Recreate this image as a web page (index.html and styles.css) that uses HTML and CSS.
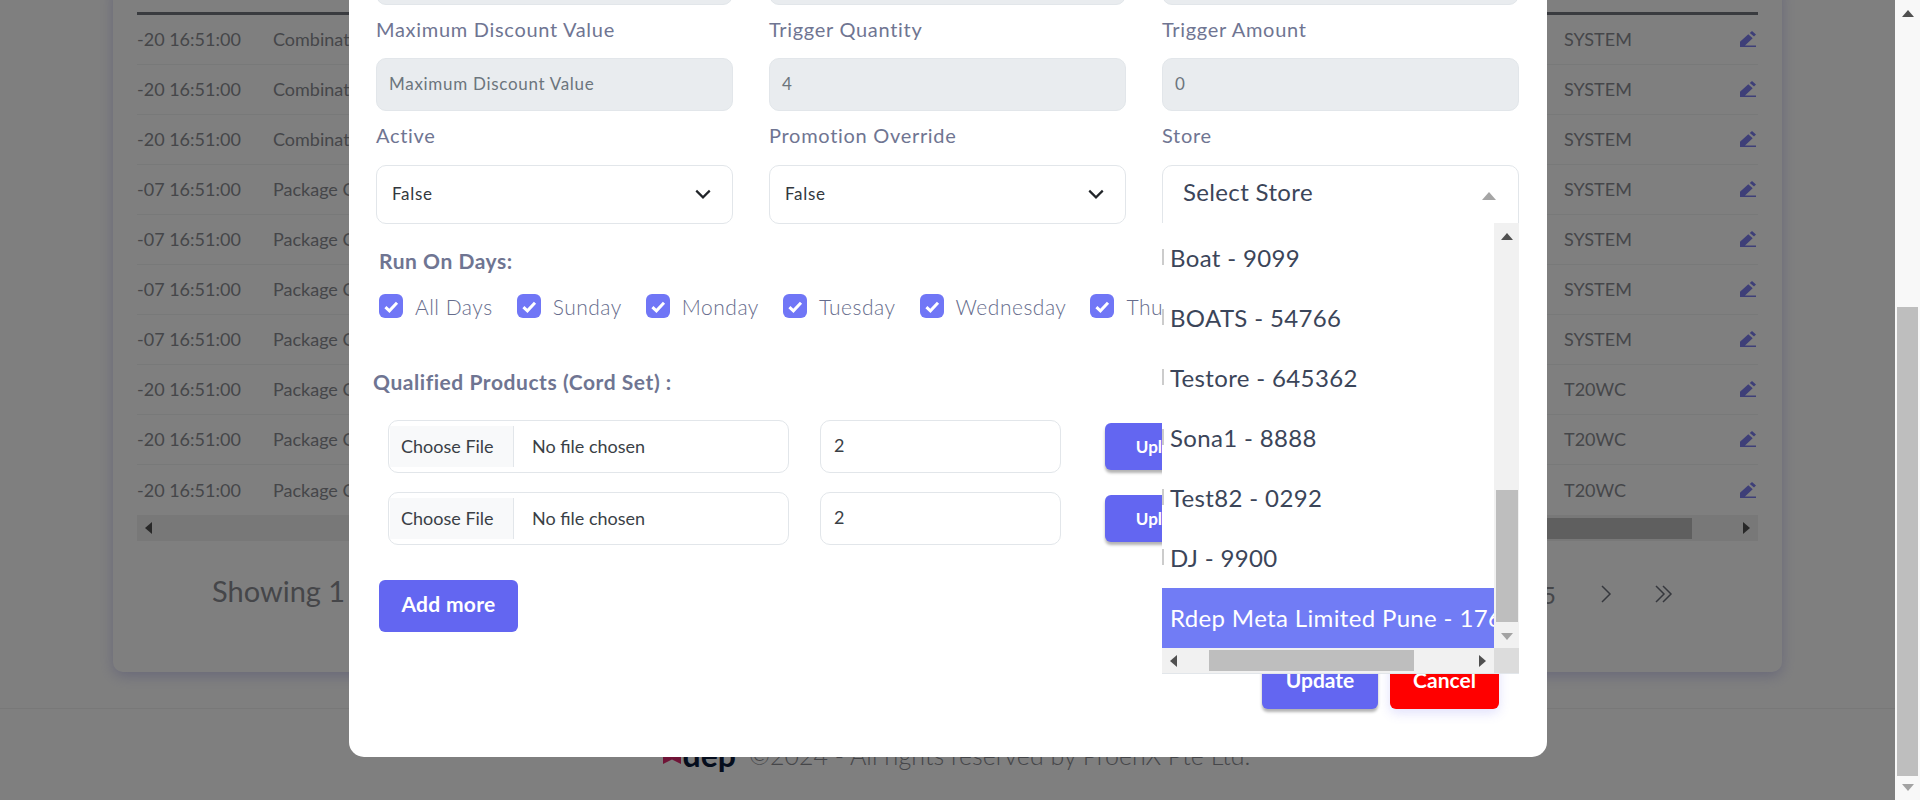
FILE: index.html
```html
<!DOCTYPE html>
<html lang="en">
  <head>
    <meta charset="UTF-8" />
    <meta name="viewport" content="width=device-width, initial-scale=1.0" />
    <title>Edit Promotion</title>
    <link rel="stylesheet" href="styles.css">
  </head>
  <body>
    <svg class="sprites">
      <symbol id="pen" viewBox="0 0 16 16"><path d="M0 10.7 8.3 3.2 12.7 7.3 5 14.5H0ZM9.8 1.9 12 0 16 3.5 14 5.6ZM0 14.5H16V16H0Z"/></symbol>
      <symbol id="tick" viewBox="0 0 12 12"><path d="M3.2 6.6 5.2 8.4 9 4.4"/></symbol>
    </svg>
    <div class="viewport">
      <div class="page">
        <div class="card">
          <div class="table-head"></div>
          <div class="row"><span>-20 16:51:00</span><span>Combination</span><span>SYSTEM</span><svg class="edit"><use href="#pen"/></svg></div>
          <div class="row"><span>-20 16:51:00</span><span>Combination</span><span>SYSTEM</span><svg class="edit"><use href="#pen"/></svg></div>
          <div class="row"><span>-20 16:51:00</span><span>Combination</span><span>SYSTEM</span><svg class="edit"><use href="#pen"/></svg></div>
          <div class="row"><span>-07 16:51:00</span><span>Package Combo</span><span>SYSTEM</span><svg class="edit"><use href="#pen"/></svg></div>
          <div class="row"><span>-07 16:51:00</span><span>Package Combo</span><span>SYSTEM</span><svg class="edit"><use href="#pen"/></svg></div>
          <div class="row"><span>-07 16:51:00</span><span>Package Combo</span><span>SYSTEM</span><svg class="edit"><use href="#pen"/></svg></div>
          <div class="row"><span>-07 16:51:00</span><span>Package Combo</span><span>SYSTEM</span><svg class="edit"><use href="#pen"/></svg></div>
          <div class="row"><span>-20 16:51:00</span><span>Package Combo</span><span>T20WC</span><svg class="edit"><use href="#pen"/></svg></div>
          <div class="row"><span>-20 16:51:00</span><span>Package Combo</span><span>T20WC</span><svg class="edit"><use href="#pen"/></svg></div>
          <div class="row row-last"><span>-20 16:51:00</span><span>Package Combo</span><span>T20WC</span><svg class="edit"><use href="#pen"/></svg></div>
          <div class="table-scroll">
            <span class="arrow arrow-left"></span>
            <span class="table-thumb"></span>
            <span class="arrow arrow-right"></span>
          </div>
          <div class="pager">
            <span class="showing">Showing 1 to 10</span>
            <div class="pages">
              <span class="page-no">5</span>
              <svg class="chev" viewBox="0 0 12 20"><path d="M2 2 10 10 2 18"/></svg>
              <svg class="chev chev-double" viewBox="0 0 20 20"><path d="M2 2 10 10 2 18M9 2 17 10 9 18"/></svg>
            </div>
          </div>
        </div>
        <footer class="footer">
          <span class="logo"><svg class="logo-mark" viewBox="0 0 20 20"><polygon points="10,0 13,7 20,8 20,20 10,15 0,20 0,8 7,7"/></svg><span class="logo-text">dep</span></span>
          <span>©2024 - All rights reserved by ProenX Pte Ltd.</span>
        </footer>
      </div>

      <div class="backdrop"></div>

      <div class="modal">
        <div class="fields">
          <div class="field">
            <label>Minimum Discount Value</label>
            <div class="input disabled"></div>
          </div>
          <div class="field">
            <label>Discount Value</label>
            <div class="input disabled"></div>
          </div>
          <div class="field">
            <label>Discount Type</label>
            <div class="input disabled"></div>
          </div>
          <div class="field">
            <label>Maximum Discount Value</label>
            <div class="input disabled">Maximum Discount Value</div>
          </div>
          <div class="field">
            <label>Trigger Quantity</label>
            <div class="input disabled">4</div>
          </div>
          <div class="field">
            <label>Trigger Amount</label>
            <div class="input disabled">0</div>
          </div>
          <div class="field">
            <label class="label-low">Active</label>
            <div class="select">False<svg class="select-chev" viewBox="0 0 16 16"><path d="M2 5 8 11 14 5"/></svg></div>
          </div>
          <div class="field">
            <label class="label-low">Promotion Override</label>
            <div class="select">False<svg class="select-chev" viewBox="0 0 16 16"><path d="M2 5 8 11 14 5"/></svg></div>
          </div>
          <div class="field store">
            <label class="label-low">Store</label>
            <div class="store-box">Select Store<span class="caret"></span></div>
            <div class="store-menu">
              <div class="store-list">
                <div class="store-item"><i></i>Boat - 9099</div>
                <div class="store-item"><i></i>BOATS - 54766</div>
                <div class="store-item"><i></i>Testore - 645362</div>
                <div class="store-item"><i></i>Sona1 - 8888</div>
                <div class="store-item"><i></i>Test82 - 0292</div>
                <div class="store-item"><i></i>DJ - 9900</div>
                <div class="store-item selected"><i></i>Rdep Meta Limited Pune - 1766</div>
              </div>
              <div class="menu-vbar">
                <span class="arrow arrow-up"></span>
                <span class="menu-vthumb"></span>
                <span class="arrow arrow-down"></span>
              </div>
              <div class="menu-hbar">
                <span class="arrow arrow-left"></span>
                <span class="menu-hthumb"></span>
                <span class="arrow arrow-right"></span>
              </div>
              <div class="menu-corner"></div>
            </div>
          </div>
        </div>

        <div class="section-title days-title">Run On Days:</div>
        <div class="days">
          <div class="day"><svg class="check"><use href="#tick"/></svg>All Days</div>
          <div class="day"><svg class="check"><use href="#tick"/></svg>Sunday</div>
          <div class="day"><svg class="check"><use href="#tick"/></svg>Monday</div>
          <div class="day"><svg class="check"><use href="#tick"/></svg>Tuesday</div>
          <div class="day"><svg class="check"><use href="#tick"/></svg>Wednesday</div>
          <div class="day"><svg class="check"><use href="#tick"/></svg>Thursday</div>
        </div>

        <div class="section-title cord-title">Qualified Products (Cord Set) :</div>
        <div class="cord-row">
          <div class="file"><span class="file-btn">Choose File</span><span class="file-name">No file chosen</span></div>
          <div class="qty">2</div>
          <button class="btn btn-upload">Upload</button>
        </div>
        <div class="cord-row">
          <div class="file"><span class="file-btn">Choose File</span><span class="file-name">No file chosen</span></div>
          <div class="qty">2</div>
          <button class="btn btn-upload">Upload</button>
        </div>
        <button class="btn btn-add">Add more</button>

        <div class="actions">
          <button class="btn btn-update">Update</button>
          <button class="btn btn-cancel">Cancel</button>
        </div>
      </div>
    </div>

    <div class="page-scrollbar">
      <span class="arrow arrow-up"></span>
      <span class="page-thumb"></span>
      <span class="arrow arrow-down"></span>
    </div>
  </body>
</html>
```

FILE: styles.css
```css
* {
  box-sizing: border-box;
}
body {
  margin: 0;
  height: 800px;
  display: flex;
  overflow: hidden;
  font-family: 'Lato', 'Open Sans', Arial, sans-serif;
  background-color: #fff;
  color: #8b8d93;
}
.sprites {
  display: none;
}
.viewport {
  position: relative;
  flex: 1;
  height: 800px;
  overflow: hidden;
}
.page {
  padding-top: 12px;
}
.card {
  margin: -30px 113px 36px 113px;
  padding: 30px 24px 0;
  height: 690px;
  background-color: #fff;
  border-radius: 10px;
  box-shadow: 0 4px 14px rgba(98, 98, 210, 0.3);
}
.table-head {
  height: 3px;
  background-color: #73777f;
}
.row {
  display: grid;
  grid-template-columns: 136px 1fr 176px 18px;
  align-items: center;
  height: 50px;
  padding-bottom: 1px;
  font-size: 18px;
  border-bottom: 1px solid #f1f2f3;
}
.row-last {
  border-bottom: none;
}
.edit {
  width: 16px;
  height: 16px;
  fill: #7c7ef0;
}
.table-scroll {
  display: flex;
  align-items: center;
  height: 26px;
  padding: 0 8px;
  background-color: #f0f0f0;
}
.table-thumb {
  width: 1103px;
  height: 21px;
  margin-left: 437px;
  background-color: #bebebe;
}
.table-scroll .arrow-right {
  margin-left: auto;
}
.pager {
  display: flex;
  align-items: center;
  justify-content: space-between;
  height: 106px;
  padding-left: 75px;
}
.showing {
  padding-bottom: 7px;
  font-size: 29px;
}
.pages {
  display: flex;
  align-items: center;
}
.page-no {
  font-size: 24px;
}
.chev {
  width: 12px;
  height: 20px;
  margin-left: 44px;
  fill: none;
  stroke: #6b6f7a;
  stroke-width: 1.5;
}
.chev-double {
  width: 20px;
  margin-left: 42px;
  margin-right: 84px;
}
.footer {
  display: flex;
  align-items: center;
  justify-content: center;
  gap: 13px;
  height: 92px;
  padding-left: 18px;
  border-top: 1px solid #f0f0f0;
  font-size: 25px;
  font-weight: 300;
}
.logo {
  display: flex;
  align-items: center;
}
.logo-mark {
  width: 18px;
  height: 18px;
  margin-right: 2px;
  fill: #e0286e;
}
.logo-text {
  font-size: 32px;
  font-weight: 700;
  color: #0b1a3b;
}
.backdrop {
  position: absolute;
  top: 0;
  right: 0;
  bottom: 0;
  left: 0;
  background-color: rgba(0, 0, 0, 0.5);
}
.modal {
  position: absolute;
  left: 349px;
  bottom: 43px;
  width: 1198px;
  padding: 0 29px 48px 27px;
  background-color: #fff;
  border-radius: 0 0 15px 15px;
}
.fields {
  display: grid;
  grid-template-columns: repeat(3, 357px);
  column-gap: 36px;
  row-gap: 11px;
}
.field label {
  display: block;
  height: 28px;
  margin-bottom: 14px;
  font-size: 20px;
  letter-spacing: 0.7px;
  line-height: 27px;
  color: #6f7592;
}
.field .label-low {
  margin-bottom: 15px;
}
.input {
  height: 53px;
  padding: 0 12px;
  font-size: 17px;
  letter-spacing: 0.7px;
  line-height: 50px;
  border: 1px solid #e2e6ea;
  border-radius: 10px;
  color: #6c757d;
}
.disabled {
  background-color: #e9ecef;
}
.select {
  display: flex;
  align-items: center;
  justify-content: space-between;
  height: 59px;
  padding: 0 20px 2px 15px;
  font-size: 17px;
  letter-spacing: 0.7px;
  color: #33373d;
  border: 1px solid #e2e6ea;
  border-radius: 10px;
}
.select-chev {
  width: 18px;
  height: 18px;
  fill: none;
  stroke: #212529;
  stroke-width: 1.9;
}
.store {
  position: relative;
  z-index: 2;
}
.store-box {
  display: flex;
  align-items: center;
  justify-content: space-between;
  height: 60px;
  padding: 0 22px 8px 20px;
  font-size: 24px;
  letter-spacing: 0.35px;
  color: #3b4559;
  border: 1px solid #e2e6ea;
  border-radius: 10px 10px 0 0;
  background-color: #fff;
}
.caret {
  width: 0;
  height: 0;
  margin-top: 10px;
  border-left: 7px solid transparent;
  border-right: 7px solid transparent;
  border-bottom: 8px solid #a5a5a5;
}
.store-menu {
  position: absolute;
  top: 101px;
  left: 0;
  right: 0;
  display: grid;
  grid-template-columns: 1fr 25px;
  grid-template-rows: 425px 25px;
  border-bottom: 1px solid #e2e6ea;
  background-color: #fff;
}
.store-list {
  padding-top: 5px;
  overflow: hidden;
}
.store-item {
  display: flex;
  align-items: center;
  height: 60px;
  padding-bottom: 2px;
  font-size: 24px;
  letter-spacing: 0.35px;
  white-space: nowrap;
  color: #3b4559;
}
.store-item i {
  flex: none;
  width: 2px;
  height: 16px;
  margin-right: 6px;
  background-color: #ccc;
}
.selected {
  background-color: #717cf5;
  color: #fff;
}
.selected i {
  background-color: transparent;
}
.arrow {
  flex: none;
  width: 0;
  height: 0;
}
.arrow-up {
  border-left: 6px solid transparent;
  border-right: 6px solid transparent;
  border-bottom: 7px solid #505050;
}
.arrow-down {
  border-left: 6px solid transparent;
  border-right: 6px solid transparent;
  border-top: 7px solid #a3a3a3;
}
.arrow-left {
  border-top: 6px solid transparent;
  border-bottom: 6px solid transparent;
  border-right: 7px solid #505050;
}
.arrow-right {
  border-top: 6px solid transparent;
  border-bottom: 6px solid transparent;
  border-left: 7px solid #505050;
}
.menu-vbar {
  display: flex;
  flex-direction: column;
  align-items: center;
  padding: 10px 0 8px;
  background-color: #f1f1f1;
}
.menu-vthumb {
  width: 22px;
  height: 132px;
  margin-top: auto;
  margin-bottom: 11px;
  background-color: #bebebe;
}
.menu-hbar {
  display: flex;
  align-items: center;
  padding: 0 8px;
  background-color: #f1f1f1;
}
.menu-hthumb {
  width: 205px;
  height: 21px;
  margin-left: 32px;
  background-color: #bebebe;
}
.menu-hbar .arrow-right {
  margin-left: auto;
}
.menu-corner {
  background-color: #dcdcdc;
}
.section-title {
  font-size: 21px;
  letter-spacing: 0.55px;
  line-height: 25px;
  font-weight: 700;
  color: #6f7592;
}
.days-title {
  margin: 23px 0 0 3px;
}
.days {
  display: flex;
  gap: 24px;
  margin: 21px 0 0 3px;
  font-size: 21px;
  letter-spacing: 0.5px;
  font-weight: 300;
  color: #666c8c;
  white-space: nowrap;
}
.day {
  display: flex;
  align-items: center;
  gap: 12px;
  height: 24px;
}
.check {
  width: 24px;
  height: 24px;
  background-color: #7076f6;
  border-radius: 6px;
  fill: none;
  stroke: #fff;
  stroke-width: 1.5;
}
.cord-title {
  margin: 51px 0 0 -3px;
}
.cord-row {
  display: flex;
  align-items: center;
  margin: 19px 0 0 12px;
}
.cord-title + .cord-row {
  margin-top: 26px;
}
.file {
  display: flex;
  align-items: center;
  width: 401px;
  height: 53px;
  padding: 5px 0 5px 1px;
  font-size: 18px;
  color: #3a3f46;
  border: 1px solid #e2e6ea;
  border-radius: 10px;
}
.file-btn {
  display: flex;
  align-items: center;
  width: 124px;
  height: 100%;
  padding: 0 0 2px 11px;
  background-color: #f8f9fa;
  border-right: 1px solid #e2e6ea;
}
.file-name {
  margin: 0 0 2px 18px;
}
.qty {
  width: 241px;
  height: 53px;
  margin: 0 44px 0 31px;
  padding: 0 13px;
  font-size: 18px;
  line-height: 49px;
  color: #3a3f46;
  border: 1px solid #e2e6ea;
  border-radius: 10px;
}
.btn {
  border: none;
  border-radius: 6px;
  font-family: inherit;
  color: #fff;
  background-color: #6366f1;
}
.btn-upload {
  width: 116px;
  height: 47px;
  font-size: 17px;
  font-weight: 700;
  box-shadow: 0 3px 3px rgba(0, 0, 0, 0.3);
}
.btn-add {
  display: block;
  width: 139px;
  height: 52px;
  margin: 35px 0 0 3px;
  padding-bottom: 6px;
  font-size: 21px;
  letter-spacing: 0.3px;
  font-weight: 700;
}
.actions {
  display: flex;
  justify-content: flex-end;
  gap: 12px;
  margin: 25px 19px 0 0;
}
.btn-update {
  width: 116px;
  height: 52px;
  padding-bottom: 8px;
  font-size: 21px;
  font-weight: 700;
  box-shadow: 0 3px 3px rgba(0, 0, 0, 0.3);
}
.btn-cancel {
  width: 109px;
  height: 52px;
  padding-bottom: 8px;
  font-size: 21px;
  font-weight: 700;
  background-color: #f00;
  box-shadow: 0 4px 12px rgba(99, 102, 241, 0.2);
}
.page-scrollbar {
  flex: none;
  display: flex;
  flex-direction: column;
  align-items: center;
  width: 25px;
  height: 800px;
  padding: 10px 0 9px;
  background-color: #f8f8f8;
}
.page-thumb {
  width: 21px;
  height: 469px;
  margin-top: auto;
  margin-bottom: 8px;
  background-color: #bebebe;
}
```
